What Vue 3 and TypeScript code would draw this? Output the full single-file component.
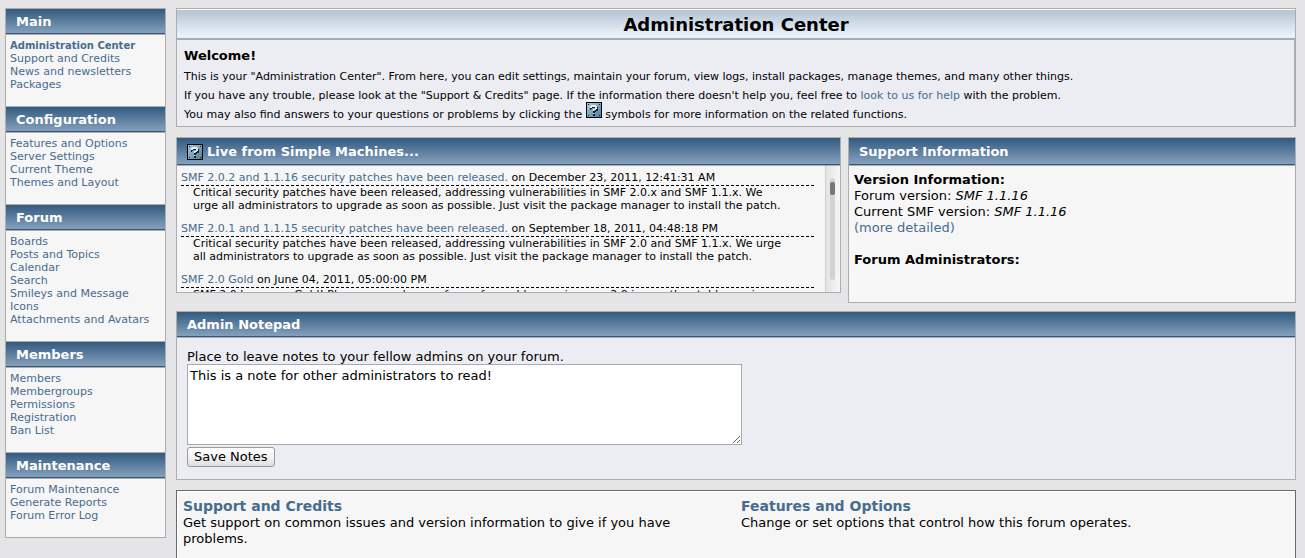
<script setup lang="ts">
import { ref } from 'vue'

interface MenuSection { title: string; items: string[] }
interface NewsItem { title: string; date: string; text: string }

const menu: MenuSection[] = [
  { title: 'Main', items: ['Administration Center', 'Support and Credits', 'News and newsletters', 'Packages'] },
  { title: 'Configuration', items: ['Features and Options', 'Server Settings', 'Current Theme', 'Themes and Layout'] },
  { title: 'Forum', items: ['Boards', 'Posts and Topics', 'Calendar', 'Search', 'Smileys and Message Icons', 'Attachments and Avatars'] },
  { title: 'Members', items: ['Members', 'Membergroups', 'Permissions', 'Registration', 'Ban List'] },
  { title: 'Maintenance', items: ['Forum Maintenance', 'Generate Reports', 'Forum Error Log'] },
]
const active = 'Administration Center'

const news: NewsItem[] = [
  {
    title: 'SMF 2.0.2 and 1.1.16 security patches have been released.',
    date: 'December 23, 2011, 12:41:31 AM',
    text: 'Critical security patches have been released, addressing vulnerabilities in SMF 2.0.x and SMF 1.1.x. We urge all administrators to upgrade as soon as possible. Just visit the package manager to install the patch.',
  },
  {
    title: 'SMF 2.0.1 and 1.1.15 security patches have been released.',
    date: 'September 18, 2011, 04:48:18 PM',
    text: 'Critical security patches have been released, addressing vulnerabilities in SMF 2.0 and SMF 1.1.x. We urge all administrators to upgrade as soon as possible. Just visit the package manager to install the patch.',
  },
  {
    title: 'SMF 2.0 Gold',
    date: 'June 04, 2011, 05:00:00 PM',
    text: 'SMF 2.0 has gone Gold! Please upgrade your forum from older versions, as 2.0 is now the stable version, and mods and themes will be built on it.',
  },
]

const tasks = [
  { title: 'Support and Credits', text: 'Get support on common issues and version information to give if you have problems.' },
  { title: 'Features and Options', text: 'Change or set options that control how this forum operates.' },
]

const notes = ref('This is a note for other administrators to read!')
</script>

<template>
  <svg class="defs" aria-hidden="true">
    <defs>
      <linearGradient id="help-fill" x1="0" y1="0" x2="1" y2="1">
        <stop offset="0" stop-color="#a9cbdc" />
        <stop offset="1" stop-color="#4d7f9c" />
      </linearGradient>
      <symbol id="help" viewBox="0 0 16 16">
        <rect width="16" height="16" fill="#000" />
        <rect x="1" y="1" width="14" height="14" fill="url(#help-fill)" />
        <path d="M2 2h1v1H2zM13 2h1v1h-1zM2 13h1v1H2zM13 13h1v1h-1z" fill="#16262f" />
        <path d="M5 4h6v1h1v4h-2v1H9v1H7V9h2V8h1V6H6v1H5v1H4V5h1zM7 12h2v2H7z" fill="#10202a" />
        <path d="M5 3h5v1h1v3h-1v1H8v1H7V7h2V5H6v1H4V4h1zM7 11h1v1H7z" fill="#e4f2f8" />
      </symbol>
    </defs>
  </svg>

  <div class="page">
    <nav class="sidebar" aria-label="Administration">
      <section v-for="section in menu" :key="section.title">
        <h2 class="bar">{{ section.title }}</h2>
        <ul>
          <li v-for="item in section.items" :key="item">
            <a href="#" :class="{ active: item === active }">{{ item }}</a>
          </li>
        </ul>
      </section>
    </nav>

    <main>
      <section class="panel intro">
        <h1>Administration Center</h1>
        <div class="welcome">
          <h2>Welcome!</h2>
          <p>This is your "Administration Center". From here, you can edit settings, maintain your forum, view logs, install packages, manage themes, and many other things.</p>
          <p>If you have any trouble, please look at the "Support &amp; Credits" page. If the information there doesn't help you, feel free to <a href="#">look to us for help</a> with the problem.</p>
          <p>You may also find answers to your questions or problems by clicking the <svg class="help" role="img" aria-label="Help"><use href="#help" /></svg> symbols for more information on the related functions.</p>
        </div>
      </section>

      <div class="columns">
        <section class="panel live">
          <h2 class="bar tall">
            <a href="#" class="help-link" aria-label="Help"><svg class="help"><use href="#help" /></svg></a>
            Live from Simple Machines...
          </h2>
          <div class="feed">
            <div class="news">
              <article v-for="item in news" :key="item.title">
                <h3><a href="#">{{ item.title }}</a> on {{ item.date }}</h3>
                <p>{{ item.text }}</p>
              </article>
            </div>
            <div class="scroll"><div class="groove"><div class="thumb"></div></div></div>
          </div>
        </section>

        <section class="panel support">
          <h2 class="bar tall">Support Information</h2>
          <div class="versions">
            <b>Version Information:</b><br />
            Forum version: <i>SMF 1.1.16</i><br />
            Current SMF version: <i>SMF 1.1.16</i><br />
            <a href="#">(more detailed)</a><br />
            <br />
            <b>Forum Administrators:</b>
          </div>
        </section>
      </div>

      <section class="panel notepad">
        <h2 class="bar">Admin Notepad</h2>
        <form @submit.prevent>
          <label for="notes">Place to leave notes to your fellow admins on your forum.</label>
          <textarea id="notes" v-model="notes"></textarea>
          <button type="submit">Save Notes</button>
        </form>
      </section>

      <section class="tasks">
        <div v-for="task in tasks" :key="task.title">
          <h2><a href="#">{{ task.title }}</a></h2>
          <p>{{ task.text }}</p>
        </div>
      </section>
    </main>
  </div>
</template>

<style>
body {
  background: #e5e5e8;
}
</style>

<style scoped>
.defs {
  position: absolute;
  width: 0;
  height: 0;
}
.page {
  box-sizing: border-box;
  display: grid;
  grid-template-columns: 161px minmax(0, 1fr);
  column-gap: 10px;
  min-height: 100vh;
  padding: 8px 9px 0 5px;
  font: 13px/16px Verdana, "DejaVu Sans", sans-serif;
  color: #000;
}
h1, h2, h3, p, ul {
  margin: 0;
  padding: 0;
}
ul {
  list-style: none;
}
a {
  color: #476c8e;
  text-decoration: none;
}
.bar {
  box-sizing: border-box;
  display: flex;
  align-items: center;
  gap: 4px;
  height: 26px;
  padding: 0 10px;
  border-bottom: 1px solid #adadad;
  background: linear-gradient(#325a7f, #88a3c0);
  box-shadow: inset 0 -1px #375576;
  color: #fff;
  font-size: 13px;
  line-height: 16px;
}
.bar.tall {
  height: 28px;
}
.sidebar {
  align-self: start;
  border: 1px solid #adadad;
  background: #f6f6f6;
  font-size: 11px;
  line-height: 13px;
}
.sidebar section + section {
  border-top: 1px solid #adadad;
}
.sidebar ul {
  padding: 4px 10px 15px 4px;
}
.sidebar li {
  height: auto;
}
.sidebar a {
  display: block;
}
.sidebar .active {
  font-size: 10px;
  font-weight: bold;
}
main {
  display: flex;
  flex-direction: column;
}
.panel {
  border: 1px solid #adadad;
}
.intro {
  margin-bottom: 10px;
  background: #ecedf3;
}
h1 {
  border-top: 1px solid #fff;
  border-bottom: 2px solid #a0b0b8;
  background: linear-gradient(#b4c4d1, #e9f1fa 90%);
  padding-top: 1px;
  font-size: 18px;
  line-height: 27px;
  text-align: center;
}
.welcome {
  padding: 8px 7px 2px;
  border-right: 1px solid #adadad;
  font-size: 11px;
}
.welcome h2 {
  margin-bottom: 3px;
  font-size: 13px;
}
.welcome p {
  line-height: 19px;
}
.help {
  width: 16px;
  height: 16px;
}
.welcome .help {
  margin-top: -4px;
  vertical-align: baseline;
}
.help-link {
  display: flex;
}
.columns {
  display: grid;
  grid-template-columns: 665fr 448fr;
  gap: 7px;
  align-items: start;
  margin-bottom: 8px;
}
.live, .support {
  background: #f6f6f6;
}
.feed {
  display: flex;
  height: 126px;
  overflow: hidden;
}
.news {
  flex: 1;
  padding: 5px 11px 0 4px;
  font-size: 11px;
  line-height: 13px;
}
.news h3 {
  padding-bottom: 1px;
  border-bottom: 1px dashed #000;
  font-size: 11px;
  font-weight: normal;
}
.news p {
  margin-bottom: 10px;
  padding: 0 28px 0 12px;
}
.scroll {
  box-sizing: border-box;
  width: 15px;
  padding: 12px 4px;
  border-left: 1px solid #cfcfcf;
  background: linear-gradient(90deg, #e4e4e4, #f6f6f6);
}
.groove {
  box-sizing: border-box;
  width: 5px;
  height: 102px;
  padding-top: 4px;
  border-radius: 3px;
  background: #d2d2d2;
}
.thumb {
  height: 13px;
  border-radius: 2px;
  background: #777;
}
.versions {
  min-height: 125px;
  padding: 6px 5px 5px;
}
.notepad {
  margin-bottom: 10px;
  background: #ecedf3;
}
form {
  display: flex;
  flex-direction: column;
  align-items: flex-start;
  padding: 11px 10px 12px;
}
label {
  line-height: 15px;
}
textarea {
  box-sizing: border-box;
  width: 555px;
  max-width: 100%;
  height: 81px;
  margin-bottom: 2px;
  padding: 3px 2px;
  border: 1px solid #a9a9b0;
  background: #fff;
  color: #000;
  font: inherit;
}
button {
  height: 20px;
  padding: 0 6px;
  border: 1px solid #999;
  border-radius: 3px;
  background: linear-gradient(#fff, #f4f4f4 50%, #dedede);
  color: #000;
  font: inherit;
}
.tasks {
  display: grid;
  grid-template-columns: 1fr 1fr;
  column-gap: 4px;
  flex: 1;
  padding: 6px 0 0 6px;
  border: 1px solid #696969;
  border-bottom: 0;
  background: #f6f6f6;
  box-shadow: inset 1px 1px #fff;
}
.tasks h2 {
  font-size: 14px;
  line-height: 18px;
}
.tasks p {
  padding-right: 40px;
}
</style>
